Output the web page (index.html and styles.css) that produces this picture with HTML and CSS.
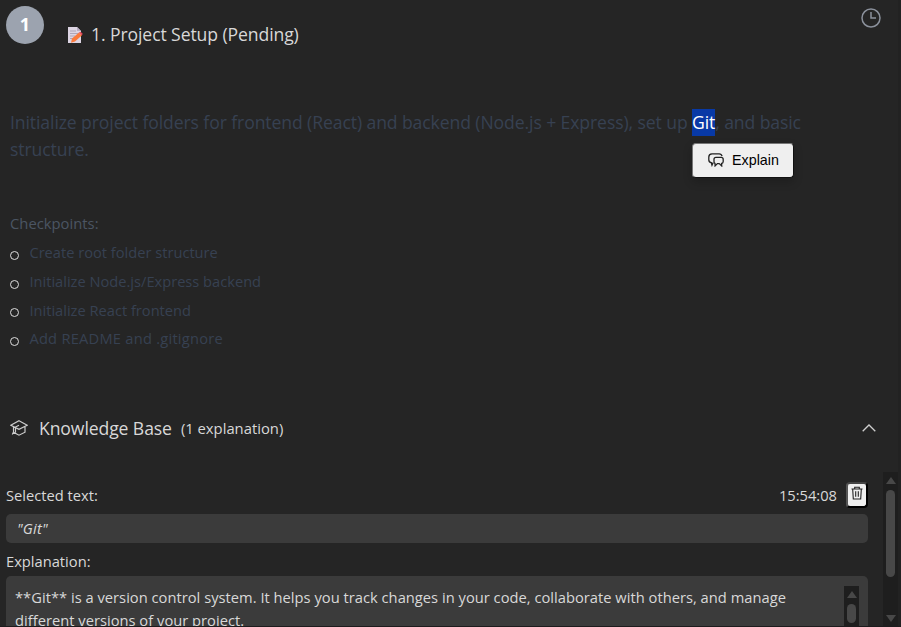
FILE: index.html
```html
<!DOCTYPE html>
<html lang="en">
<head>
<meta charset="utf-8">
<title>Project Setup</title>
<link rel="stylesheet" href="styles.css">
</head>
<body>
<main class="panel">
  <header class="step-header">
    <span class="step-number">1</span>
    <svg class="memo" viewBox="0 0 16 16"><path d="M1 0h9l4 4v12H1z" fill="#ddd5e3"/><path d="M10 0l4 4h-4z" fill="#b9aec4"/><path d="M3 4h6M3 6.500h8M3 9h5M3 11.500h3" stroke="#afa6b8" stroke-width="1"/><path d="M5 11.500L12 5.500l2.800 3L8 14.500l-4 1.200z" fill="#fb7a3c"/><path d="M12 5.500l1.500-.7 2.200 2-.9 1.700z" fill="#e64b5d"/></svg>
    <h1 class="step-title">1. Project Setup (Pending)</h1>
    <svg class="clock" viewBox="0 0 20 20"><circle cx="10" cy="10" r="9"/><path d="M10 4v6h5"/></svg>
  </header>

  <p class="description">Initialize project folders for frontend (React) and backend (Node.js + Express), set up <span class="selection">Git<button class="explain"><svg viewBox="0 0 16 14"><path d="M5.200 9.600L4 12.200 3.300 9.700C1.600 9.500.8 8.600.8 6.800V4C.8 1.900 1.900.9 4 .8h7.200c1.600 0 2.500.8 2.900 2.400"/><path d="M8 4.400h5.100c1.400 0 2.100.8 2.100 2.100v1.900c0 1.200-.6 1.900-1.600 2.100l.1 2.400-2.500-2.300H9.400l-2.300 2.300-.1-2.500C6.200 10.100 6 9.600 6 8.400V6.300c0-1.200.6-1.900 2-1.900z"/></svg><span>Explain</span></button></span>, and basic<br>structure.</p>

  <section class="checkpoints">
    <h2>Checkpoints:</h2>
    <ul>
      <li>Create root folder structure</li>
      <li>Initialize Node.js/Express backend</li>
      <li>Initialize React frontend</li>
      <li class="wide">Add README and .gitignore</li>
    </ul>
  </section>

  <div class="kb-header">
    <svg class="cap" viewBox="0 0 18 16"><path d="M9 .8l8.200 4.400L9 9.400.8 5.200zM3.500 7v5.300L9 15.200l6-3V7M9 5.200L5.500 7v5.500M3.500 12l-1.200 2.500"/></svg>
    <h2 class="kb-title">Knowledge Base</h2>
    <span class="kb-count">(1 explanation)</span>
    <svg class="chevron" viewBox="0 0 14 8"><path d="M.7 7.300L7 1l6.300 6.300"/></svg>
  </div>

  <section class="kb-body">
    <div class="entry">
      <div class="entry-head">
        <span class="label">Selected text:</span>
        <time class="time">15:54:08</time>
        <button class="delete"><svg viewBox="0 0 12 14"><path d="M.5 3h11M3.700 2.800V1.200h4.600v1.600M1.700 3.200l.6 9.800h7.400l.6-9.800M4.700 5.200v5.500M7.300 5.200v5.500"/></svg></button>
      </div>
      <div class="quote">"Git"</div>
      <div class="label explanation-label">Explanation:</div>
      <div class="answer">
        <div class="answer-text">**Git** is a version control system. It helps you track changes in your code, collaborate with others, and manage<br>different versions of your project.</div>
        <div class="scroll inner"><i class="up"></i><i class="thumb"></i></div>
      </div>
    </div>
    <div class="scroll outer"><i class="up"></i><i class="thumb"></i><i class="down"></i></div>
  </section>
</main>
</body>
</html>
```
FILE: styles.css
```css
* { box-sizing: border-box; }
body {
  margin: 0;
  background: #252525;
  color: #d8d8d8;
  font-family: "Open Sans", "Noto Sans", sans-serif;
  overflow: hidden;
}
h1, h2, p, ul { margin: 0; padding: 0; font-weight: 400; }
svg { display: block; fill: none; flex: none; }
button { font-family: "Liberation Sans", sans-serif; padding: 0; }
.panel {
  height: 627px;
  display: flex;
  flex-direction: column;
  overflow: hidden;
  white-space: nowrap;
  border-right: 3px solid #222;
  border-bottom: 1px solid #1d1b1d;
}
.step-header { height: 109px; display: flex; align-items: flex-start; padding: 6px 17px 0 6px; }
.step-number {
  width: 38px; height: 38px; border-radius: 50%;
  background: #9ca3af; color: #fff;
  font-size: 18px; font-weight: 700; line-height: 37px; text-align: center;
}
.memo { width: 16px; height: 16px; margin: 21px 0 0 23px; }
.step-title { margin: 15px 0 0 8px; font-size: 17.600px; line-height: 26px; letter-spacing: -.1px; }
.clock { width: 20px; height: 20px; margin: 2px 0 0 auto; stroke: #8b919c; stroke-width: 1.500; }
.description { height: 103px; padding-left: 10px; font-size: 17.600px; line-height: 27px; letter-spacing: -.1px; color: #374152; }
.selection { position: relative; display: inline-block; height: 27px; vertical-align: top; background: #0839a6; color: #fff; }
.explain {
  position: absolute; left: 0; top: 34px; z-index: 2;
  width: 102px; height: 35px;
  display: flex; align-items: center; gap: 8px; padding: 0 0 1px 15px;
  background: #efefef; color: #000;
  border: 1px solid #111; border-top-color: #777; border-left-color: #777; border-radius: 4px;
  box-shadow: 0 4px 10px rgba(0, 0, 0, .2);
  font-size: 14.300px; letter-spacing: 0;
}
.explain svg { width: 16px; height: 14px; stroke: #222; stroke-width: 1.300; }
.checkpoints { height: 194px; padding-left: 10px; font-size: 14.650px; color: #374152; }
.checkpoints h2 { font-size: 14.800px; line-height: 22px; color: #4b5563; margin-bottom: 4px; }
.checkpoints ul { list-style: none; }
.checkpoints li { height: 28.700px; line-height: 28px; display: flex; align-items: center; }
.checkpoints .wide { letter-spacing: .25px; }
.checkpoints li::before {
  content: ""; width: 7px; height: 7px; margin: 6px 10px 0 1px;
  margin-right: 10.500px; margin-left: .5px;
  border: 1.500px solid #ddd; border-radius: 50%;
}
.checkpoints li { position: relative; left: -.6px; }
.kb-header { height: 66px; display: flex; align-items: center; padding: 0 22px 23px 10px; }
.cap { width: 18px; height: 16px; stroke: #ccc; stroke-width: 1.200; margin-right: 11px; }
.kb-title { font-size: 17.600px; line-height: 24px; letter-spacing: -.1px; }
.kb-count { font-size: 14.800px; margin: 1px 0 0 9px; }
.chevron { width: 14px; height: 8px; margin-left: auto; stroke: #d0d0d0; stroke-width: 1.300; }
.kb-body { flex: 1; display: flex; min-height: 0; overflow: hidden; font-size: 14.700px; }
.entry { flex: 1; padding: 9px 15px 0 6px; }
.entry-head { display: flex; align-items: center; height: 27px; }
.time { margin-left: auto; }
.delete {
  width: 22px; height: 26px; margin: 1px 0 0 9px;
  display: flex; align-items: center; justify-content: center;
  background: #efefef; border: 2px solid #000; border-top-color: #444; border-left-color: #555; border-radius: 4px;
}
.delete svg { width: 12px; height: 14px; margin-top: -4px; stroke: #222; stroke-width: 1.100; }
.quote { height: 29px; margin-top: 6px; padding-left: 11px; line-height: 29px; font-style: italic; letter-spacing: .2px; background: #3b3b3b; border-radius: 5px; }
.explanation-label { height: 33px; line-height: 37px; }
.answer { height: 80px; display: flex; justify-content: space-between; padding: 10px 9px 0 9px; background: #3b3b3b; border-radius: 5px; }
.answer-text { line-height: 23px; letter-spacing: .015px; }
.scroll { width: 15px; background: #1e1e1e; display: flex; flex-direction: column; align-items: center; }
.scroll i { display: block; flex: none; }
.up { border: 5px solid transparent; border-top: 0; border-bottom: 7px solid #484848; margin: 5px 0 6px; }
.down { border: 5px solid transparent; border-bottom: 0; border-top: 7px solid #484848; margin: auto 0 4px; }
.thumb { width: 9px; background: #484848; border-radius: 5px; }
.inner .thumb { height: 19px; }
.outer .thumb { height: 87px; }
```
